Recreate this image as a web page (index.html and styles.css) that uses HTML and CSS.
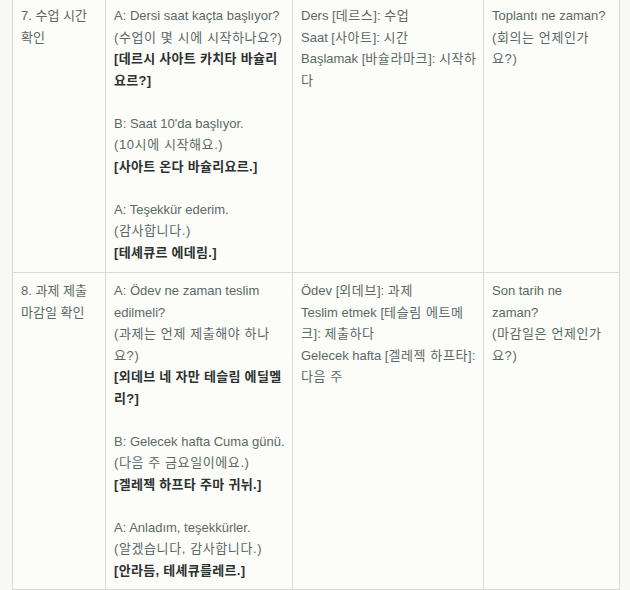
FILE: index.html
```html
<!DOCTYPE html>
<html lang="ko">
<head>
<meta charset="utf-8">
<link rel="stylesheet" href="styles.css">
</head>
<body>
<div class="wrap">
<table class="conv">
<colgroup>
<col class="c1"><col class="c2"><col class="c3"><col class="c4">
</colgroup>
<tbody>
<tr>
<td>7. 수업 시간 확인</td>
<td>
<p>A: Dersi saat kaçta başlıyor?<br><span class="ko">(수업이 몇 시에 시작하나요?)</span><br><strong class="ko">[데르시 사아트 카치타 바슐리요르?]</strong></p>
<p>B: Saat 10'da başlıyor.<br><span class="ko">(10시에 시작해요.)</span><br><strong class="ko">[사아트 온다 바슐리요르.]</strong></p>
<p>A: Teşekkür ederim.<br><span class="ko">(감사합니다.)</span><br><strong class="ko">[테셰큐르 에데림.]</strong></p>
</td>
<td class="vocab">Ders [<span class="ko">데르스</span>]: <span class="ko">수업</span><br>Saat [<span class="ko">사아트</span>]: <span class="ko">시간</span><br>Başlamak [<span class="ko">바슐라마크</span>]: <span class="ko">시작하다</span></td>
<td class="alt">Toplantı ne zaman?<br><span class="ko">(회의는 언제인가요?)</span></td>
</tr>
<tr>
<td>8. 과제 제출 마감일 확인</td>
<td>
<p>A: Ödev ne zaman teslim edilmeli?<br><span class="ko">(과제는 언제 제출해야 하나요?)</span><br><strong class="ko">[외데브 네 자만 테슬림 에딜멜리?]</strong></p>
<p>B: Gelecek hafta Cuma günü.<br><span class="ko">(다음 주 금요일이에요.)</span><br><strong class="ko">[겔레젝 하프타 주마 귀뉘.]</strong></p>
<p>A: Anladım, teşekkürler.<br><span class="ko">(알겠습니다, 감사합니다.)</span><br><strong class="ko">[안라듬, 테셰큐를레르.]</strong></p>
</td>
<td class="vocab">Ödev [<span class="ko">외데브</span>]: <span class="ko">과제</span><br>Teslim etmek [<span class="ko">테슬림 에트메크</span>]: <span class="ko">제출하다</span><br>Gelecek hafta [<span class="ko">겔레젝 하프타</span>]: <span class="ko">다음 주</span></td>
<td class="alt">Son tarih ne zaman?<br><span class="ko">(마감일은 언제인가요?)</span></td>
</tr>
</tbody>
</table>
</div>
</body>
</html>
```

FILE: styles.css
```css
html, body {
  margin: 0;
  padding: 0;
  background: #f9faf6;
}
body {
  font-family: "Liberation Sans", "Noto Sans CJK KR", sans-serif;
  font-size: 13px;
  line-height: 21.5px;
  color: #5b6868;
}
.wrap {
  padding-left: 12px;
  margin-top: -4px;
}
.conv {
  border-collapse: collapse;
  width: 607px;
  table-layout: fixed;
  background: #fcfdf9;
}
.c1 { width: 93px; }
.c2 { width: 187px; }
.c3 { width: 191px; }
.c4 { width: 136px; }
.conv td {
  border: 1px solid #d9d9d2;
  padding: 8px 7px 9px 8px;
  vertical-align: top;
  word-break: normal;
}
.conv tr:last-child td {
  padding-top: 7px;
  padding-bottom: 8px;
}
.conv td.vocab {
  padding-right: 6px;
}
.conv td.alt {
  padding-right: 10px;
}
.ko {
  letter-spacing: 0.6px;
}
.conv p {
  margin: 0 0 21.5px 0;
}
.conv p:last-child {
  margin-bottom: 0;
}
.conv strong {
  color: #2c3232;
  font-weight: 700;
}
.conv strong.ko {
  letter-spacing: 0.3px;
}
```
